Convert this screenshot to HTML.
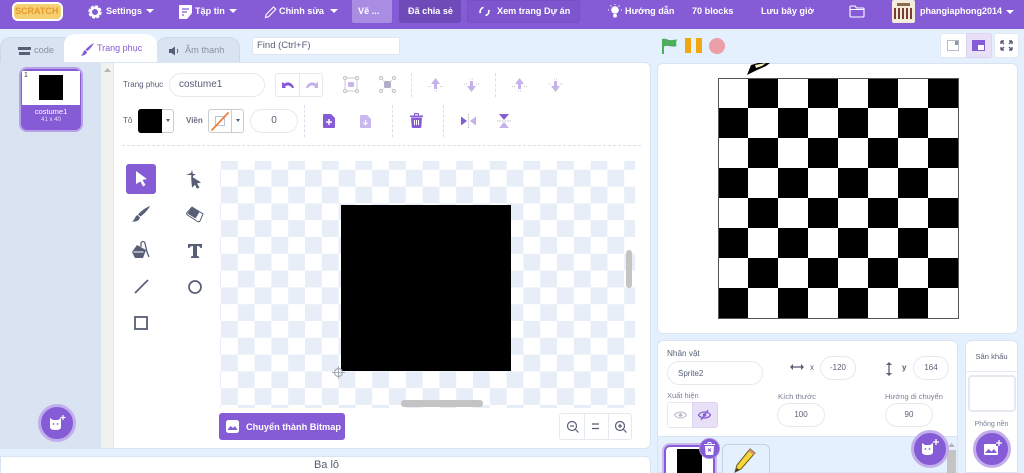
<!DOCTYPE html>
<html><head><meta charset="utf-8"><style>
*{box-sizing:border-box;margin:0;padding:0}
html,body{width:1024px;height:473px;overflow:hidden;background:#e5f0ff;font-family:"Liberation Sans",sans-serif;color:#575e75}
#w{position:relative;width:1024px;height:473px;overflow:hidden;background:#e5f0ff}
.a{position:absolute}
.t{position:absolute;white-space:nowrap;line-height:14px}
.h{color:#fff;font-size:9.1px;font-weight:bold;top:4px}
.pill{position:absolute;background:#fff;border:1px solid #e6e9ef;border-radius:14px;text-align:center;color:#575e75}
svg{position:absolute;overflow:visible}
</style></head><body><div id="w">
<!-- header -->
<div class="a" style="left:0;top:0;width:1024px;height:29px;background:#855cd6"></div>
<div class="a" style="left:12px;top:2px;width:51px;height:19px;background:#f6cf73;border:2px solid #fff;border-radius:6px"></div>
<div class="t" style="left:15px;top:4px;width:46px;font-size:9px;font-weight:bold;color:#e39a2d">SCRATCH</div>
<svg style="left:88px;top:5px" width="14" height="14" viewBox="0 0 14 14"><circle cx="7" cy="7" r="5.400" fill="none" stroke="#fff" stroke-width="2.600" stroke-dasharray="2.800 1.440" /><circle cx="7" cy="7" r="4.200" fill="none" stroke="#fff" stroke-width="2.400"/></svg>
<div class="t h" style="left:106px">Settings</div>
<svg style="left:146px;top:9px" width="8" height="5"><path d="M0 0h8L4 4z" fill="#fff"/></svg>
<svg style="left:179px;top:5px" width="13" height="14" viewBox="0 0 13 14"><path d="M1 0h11a1 1 0 0 1 1 1v7l-5 6H1a1 1 0 0 1-1-1V1a1 1 0 0 1 1-1z" fill="#fff"/><path d="M3 4h7M3 7h5M3 10h2" stroke="#855cd6" stroke-width="1.300"/></svg>
<div class="t h" style="left:195px">Tập tin</div>
<svg style="left:229px;top:9px" width="8" height="5"><path d="M0 0h8L4 4z" fill="#fff"/></svg>
<svg style="left:264px;top:5px" width="13" height="14" viewBox="0 0 13 14"><path d="M1.500 12.500l.7-3L9.500 2l2.300 2.300-7.300 7.400z" fill="none" stroke="#fff" stroke-width="1.100"/></svg>
<div class="t h" style="left:279px">Chỉnh sửa</div>
<svg style="left:330px;top:9px" width="8" height="5"><path d="M0 0h8L4 4z" fill="#fff"/></svg>
<div class="a" style="left:352px;top:0;width:40px;height:23px;background:#a88de3;border-radius:0 0 2px 2px"></div>
<div class="t h" style="left:358px">Vẽ ...</div>
<div class="a" style="left:399px;top:0;width:62px;height:23px;background:#6e4bb8;border-radius:0 0 3px 3px"></div>
<div class="t h" style="left:408px">Đã chia sẻ</div>
<div class="a" style="left:467px;top:0;width:113px;height:23px;background:#7d56cd;border-radius:0 0 3px 3px;border:1px solid #7650c4"></div>
<svg style="left:479px;top:6px" width="11" height="11" viewBox="0 0 11 11"><path d="M4.500 1.500A4 4 0 0 0 1.500 7L.5 5.500M6.500 9.500A4 4 0 0 0 9.500 4l1 1.500" fill="none" stroke="#fff" stroke-width="1.500"/></svg>
<div class="t h" style="left:497px">Xem trang Dự án</div>
<svg style="left:608px;top:4px" width="14" height="15" viewBox="0 0 14 15"><circle cx="7" cy="6" r="3.800" fill="#fff"/><rect x="5.200" y="10" width="3.600" height="3.500" rx="1" fill="#fff"/><path d="M7 0v1M1 6H0M14 6h-1M2.500 1.500l1 1M11.500 1.500l-1 1" stroke="#fff"/></svg>
<div class="t h" style="left:625px">Hướng dẫn</div>
<div class="t h" style="left:692px">70 blocks</div>
<div class="t h" style="left:761px">Lưu bây giờ</div>
<svg style="left:849px;top:5px" width="16" height="13" viewBox="0 0 16 13"><path d="M1 3V2a1 1 0 0 1 1-1h4l1.500 2H14a1 1 0 0 1 1 1v7a1 1 0 0 1-1 1H2a1 1 0 0 1-1-1zM1 4.500h14" fill="none" stroke="#fff" stroke-width="1.100"/></svg>
<div class="a" style="left:892px;top:0;width:23px;height:23px;background:#f3ebdc;border-radius:2px"></div>
<div class="a" style="left:894px;top:8px;width:19px;height:11px;background:repeating-linear-gradient(90deg,#7a3b32 0 2px,#f3ebdc 2px 4px)"></div>
<div class="a" style="left:897px;top:3px;width:13px;height:3px;background:#8a6b4c"></div>
<div class="t h" style="left:920px;font-size:9px">phangiaphong2014</div>
<svg style="left:1006px;top:10px" width="8" height="5"><path d="M0 0h8L4 4z" fill="#fff"/></svg>

<!-- tabs -->
<div class="a" style="left:0;top:37px;width:72px;height:26px;background:#d9e3f2;border:1px solid #ccd7e8;border-bottom:0;border-radius:11px 11px 0 0"></div>
<div class="a" style="left:156px;top:37px;width:84px;height:26px;background:#d9e3f2;border:1px solid #ccd7e8;border-bottom:0;border-radius:11px 11px 0 0"></div>
<div class="a" style="left:64px;top:34px;width:93px;height:30px;background:#fff;border-radius:11px 11px 0 0"></div>
<svg style="left:18px;top:46px" width="13" height="10" viewBox="0 0 13 10"><path d="M0 1h13v3H0zM1 6h11v3H1z" fill="#575e75"/></svg>
<div class="t" style="left:34px;top:43px;font-size:9.200px;color:#8a91a3">code</div>
<svg style="left:81px;top:43px" width="13" height="13" viewBox="0 0 13 13"><path d="M13 0C11.500 3 8.500 6.500 6.500 8L4.500 6.500C7 4 10 1.500 13 0zM4 7l2 2C5.500 11.500 2.500 13 0 12.500 2 11.500 2 8 4 7z" fill="#855cd6"/></svg>
<div class="t" style="left:97px;top:41px;font-size:9px;color:#855cd6">Trang phục</div>
<svg style="left:169px;top:46px" width="12" height="10" viewBox="0 0 12 10"><path d="M0 3h2.500L6 .5v9L2.500 7H0z" fill="#575e75"/><path d="M8 3a3 3 0 0 1 0 4" fill="none" stroke="#575e75"/></svg>
<div class="t" style="left:185px;top:43px;font-size:9.200px;color:#8a91a3">Âm thanh</div>
<div class="a" style="left:252px;top:37px;width:148px;height:18px;background:#fff;border:1px solid #dfe6f2;border-radius:2px"></div>
<div class="t" style="left:257px;top:39px;font-size:9.500px;color:#575e75">Find (Ctrl+F)</div>

<!-- editor panel -->
<div class="a" style="left:0;top:62px;width:651px;height:387px;background:#fff;border:1px solid #d9e3f2;border-radius:0 6px 6px 0"></div>
<div class="a" style="left:0;top:63px;width:101px;height:385px;background:#d9e3f2"></div>
<div class="a" style="left:101px;top:63px;width:13px;height:385px;background:#f1f1f1;border-right:1px solid #e6e6e6"></div>
<svg style="left:104px;top:68px" width="7" height="5"><path d="M0 4h7L3.500 0z" fill="#b5b5b5"/></svg>
<!-- costume thumb -->
<div class="a" style="left:19px;top:67px;width:64px;height:65px;background:#855cd6;border:2.500px solid #b7a0e8;border-radius:8px"></div>
<div class="a" style="left:22px;top:71px;width:58px;height:34px;background:#fff"></div>
<div class="a" style="left:39px;top:75px;width:24px;height:25px;background:#000"></div>
<div class="t" style="left:24px;top:72px;font-size:7px;color:#333;line-height:8px">1</div>
<div class="t" style="left:21px;top:107px;width:60px;text-align:center;font-size:7.500px;color:#fff;line-height:10px">costume1</div>
<div class="t" style="left:21px;top:116px;width:60px;text-align:center;font-size:6px;color:#e6dcf7;line-height:9px">41 x 40</div>
<!-- add costume -->
<div class="a" style="left:38px;top:404px;width:38px;height:38px;background:#855cd6;border:3px solid #c2aeea;border-radius:50%"></div>
<svg style="left:49px;top:415px" width="17" height="17" viewBox="0 0 17 17"><path d="M1 3l3 2h5l3-2v9c0 2-2 3-5.500 3S1 14 1 12z" fill="#fff"/><circle cx="4.500" cy="9" r=".9" fill="#855cd6"/><circle cx="8.500" cy="9" r=".9" fill="#855cd6"/><path d="M14 0v5M11.500 2.500h5" stroke="#fff" stroke-width="1.200"/></svg>

<!-- toolbar -->
<div class="t" style="left:123px;top:78px;font-size:8px">Trang phục</div>
<div class="pill" style="left:169px;top:73px;width:96px;height:24px"></div>
<div class="t" style="left:179px;top:78px;font-size:10px">costume1</div>
<div class="a" style="left:275px;top:73px;width:48px;height:24px;background:#fff;border:1px solid #e6e9ef;border-radius:3px"></div>
<div class="a" style="left:299px;top:73px;width:1px;height:24px;background:#e6e9ef"></div>
<svg style="left:282px;top:81px" width="12" height="8" viewBox="0 0 12 8"><path d="M0 1l0 6 4 0-1-1.500C5 4 8 4 10 7h2C11 2 6 0 2.500 2.500z" fill="#855cd6"/></svg>
<svg style="left:306px;top:81px" width="12" height="8" viewBox="0 0 12 8"><path d="M12 1v6H8l1-1.500C7 4 4 4 2 7H0C1 2 6 0 9.500 2.500z" fill="#c4b2ea"/></svg>
<svg style="left:343px;top:76px" width="16" height="17" viewBox="0 0 16 17" opacity=".45"><rect x="2" y="2" width="12" height="13" fill="none" stroke="#8e8aa8"/><rect x="5" y="6" width="6" height="5" rx="1" fill="#855cd6"/><circle cx="2" cy="2" r="1.500" fill="#fff" stroke="#777"/><circle cx="14" cy="2" r="1.500" fill="#fff" stroke="#777"/><circle cx="2" cy="15" r="1.500" fill="#fff" stroke="#777"/><circle cx="14" cy="15" r="1.500" fill="#fff" stroke="#777"/></svg>
<svg style="left:379px;top:76px" width="17" height="17" viewBox="0 0 17 17" opacity=".45"><path d="M2 2l13 13M15 2L2 15" stroke="#aaa" stroke-dasharray="2 1"/><rect x="5" y="5" width="7" height="7" rx="2" fill="#5b4c8c"/><circle cx="2" cy="2" r="1.500" fill="#fff" stroke="#777"/><circle cx="15" cy="2" r="1.500" fill="#fff" stroke="#777"/><circle cx="2" cy="15" r="1.500" fill="#fff" stroke="#777"/><circle cx="15" cy="15" r="1.500" fill="#fff" stroke="#777"/></svg>
<div class="a" style="left:411px;top:73px;height:24px;border-left:1px dashed #dcdcea"></div>
<div class="a" style="left:495px;top:73px;height:24px;border-left:1px dashed #dcdcea"></div>
<svg style="left:428px;top:78px" width="15" height="14" viewBox="0 0 15 14"><path d="M7.500 0L12 6H9v5H6V6H3z" fill="#c4b2ea"/><path d="M0 8.500h3M12 8.500h3M6 13h3" stroke="#ccc" stroke-dasharray="1 1"/></svg>
<svg style="left:464px;top:78px" width="15" height="14" viewBox="0 0 15 14"><path d="M7.500 14L12 8H9V3H6v5H3z" fill="#c4b2ea"/><path d="M0 6h3M12 6h3M6 1h3" stroke="#ccc" stroke-dasharray="1 1"/></svg>
<svg style="left:512px;top:78px" width="15" height="14" viewBox="0 0 15 14"><path d="M7.500 0L12 6H9v5H6V6H3z" fill="#c4b2ea"/><path d="M0 8.500h3M12 8.500h3M6 13h3" stroke="#ccc" stroke-dasharray="1 1"/></svg>
<svg style="left:548px;top:78px" width="15" height="14" viewBox="0 0 15 14"><path d="M7.500 14L12 8H9V3H6v5H3z" fill="#c4b2ea"/><path d="M0 6h3M12 6h3M6 1h3" stroke="#ccc" stroke-dasharray="1 1"/></svg>

<div class="t" style="left:123px;top:114px;font-size:8px">Tô</div>
<div class="a" style="left:138px;top:109px;width:36px;height:24px;background:#fff;border:1px solid #ccc;border-radius:3px"></div>
<div class="a" style="left:138px;top:109px;width:24px;height:24px;background:#000;border-radius:3px 0 0 3px"></div>
<svg style="left:166px;top:119px" width="4" height="3"><path d="M0 0h4L2 3z" fill="#575e75"/></svg>
<div class="t" style="left:186px;top:114px;font-size:8px;font-weight:bold;color:#6b7185">Viền</div>
<div class="a" style="left:208px;top:109px;width:36px;height:24px;background:#fff;border:1px solid #ccc;border-radius:3px"></div>
<div class="a" style="left:231px;top:109px;width:1px;height:24px;background:#ccc"></div>
<svg style="left:209px;top:110px" width="22" height="22" viewBox="0 0 22 22"><rect x="6.500" y="6.500" width="9" height="9" fill="#fff" stroke="#b9c4d8"/><path d="M3 20L19 3" stroke="#e8823c" stroke-width="1.800" stroke-linecap="round"/></svg>
<svg style="left:236px;top:119px" width="4" height="3"><path d="M0 0h4L2 3z" fill="#575e75"/></svg>
<div class="pill" style="left:250px;top:109px;width:48px;height:24px"></div>
<div class="t" style="left:250px;top:114px;width:48px;text-align:center;font-size:10px">0</div>
<div class="a" style="left:304px;top:105px;height:32px;border-left:1px dashed #dcdcea"></div>
<div class="a" style="left:392px;top:105px;height:32px;border-left:1px dashed #dcdcea"></div>
<div class="a" style="left:443px;top:105px;height:32px;border-left:1px dashed #dcdcea"></div>
<svg style="left:323px;top:114px" width="12" height="14" viewBox="0 0 12 14"><path d="M1 0h7l4 4v9a1 1 0 0 1-1 1H1a1 1 0 0 1-1-1V1a1 1 0 0 1 1-1z" fill="#855cd6"/><path d="M6 5v6M3 8h6" stroke="#fff" stroke-width="1.400"/></svg>
<svg style="left:360px;top:115px" width="11" height="13" viewBox="0 0 11 13"><path d="M1 0h6l4 4v8a1 1 0 0 1-1 1H1a1 1 0 0 1-1-1V1a1 1 0 0 1 1-1z" fill="#c9b8ee"/><path d="M5.500 5v4M3.500 7.500l2 2 2-2" stroke="#fff" stroke-width="1.200" fill="none"/></svg>
<svg style="left:410px;top:113px" width="13" height="15" viewBox="0 0 13 15"><path d="M0 2.500h13v1.500H0zM4 2.500V1a1 1 0 0 1 1-1h3a1 1 0 0 1 1 1v1.500H8V1.200H5v1.300zM1 4.500h11l-.7 9.500a1 1 0 0 1-1 1H2.700a1 1 0 0 1-1-1z" fill="#855cd6"/><path d="M4.500 7v5M6.500 7v5M8.500 7v5" stroke="#fff" stroke-width="1"/></svg>
<svg style="left:460px;top:114px" width="17" height="14" viewBox="0 0 17 14"><path d="M1 2.500l6 4.500-6 4.500z" fill="#855cd6"/><path d="M16 2.500L10 7l6 4.500z" fill="#c4b2ea"/><path d="M8.500 0v14" stroke="#bbb" stroke-dasharray="1.500 1"/></svg>
<svg style="left:497px;top:113px" width="14" height="16" viewBox="0 0 14 16"><path d="M2 1h10L7 7z" fill="#855cd6"/><path d="M2 15h10L7 9z" fill="#c4b2ea"/><path d="M0 8h14" stroke="#bbb" stroke-dasharray="1.500 1"/></svg>
<div class="a" style="left:122px;top:145px;width:519px;border-top:1px dashed #dcdcea"></div>

<!-- tools -->
<div class="a" style="left:126px;top:164px;width:30px;height:30px;background:#855cd6;border-radius:3px"></div>
<svg style="left:135px;top:171px" width="13" height="16" viewBox="0 0 13 16"><path d="M1 0l11 8-4.500 1 3 5-2.500 1.500-2.500-5L1 13z" fill="#fff"/></svg>
<svg style="left:186px;top:169px" width="17" height="20" viewBox="0 0 17 20"><path d="M5 7l10 6.500-4 1 2.500 4-2.500 1.200-2-4-3 3z" fill="#575e75"/><path d="M0 6l5-2 1-3 1 4 3 0-3 2 0 2-2-3z" fill="#575e75"/></svg>
<svg style="left:132px;top:206px" width="18" height="16" viewBox="0 0 18 16"><path d="M18 0C16 4 12 8 8.500 10.500L6 8.500C9 5 14 1.500 18 0zM5.500 9l2.500 2.500c-.5 3-4 4.500-8 4 2.500-1 3-5.500 5.500-6.500z" fill="#575e75"/></svg>
<svg style="left:186px;top:207px" width="18" height="16" viewBox="0 0 18 16"><path d="M6 0l11 7-3 7a2 2 0 0 1-2.500.5L1.500 8a2 2 0 0 1-.5-2.500z" fill="#fff" stroke="#575e75" stroke-width="1"/><path d="M6 0L13.500 5 9.500 11.500 1.500 6.500z" fill="#575e75"/></svg>
<svg style="left:132px;top:241px" width="18" height="19" viewBox="0 0 18 19"><path d="M5 4L14 9 11 17H3L0 11z" fill="#575e75"/><path d="M1.500 11h10" stroke="#fff"/><path d="M9 6V2.500a2 2 0 0 1 4 0L15 11l2 5" fill="none" stroke="#575e75" stroke-width="1.300"/></svg>
<svg style="left:187px;top:243px" width="16" height="16" viewBox="0 0 16 16"><path d="M1 1h14v4h-1.500C13 3.500 12 3 10 3v10l2 .5V15H4v-1.500L6 13V3C4 3 3 3.500 2.500 5H1z" fill="#575e75"/></svg>
<svg style="left:134px;top:279px" width="15" height="15"><path d="M1 14L14 1" stroke="#575e75" stroke-width="1.700"/></svg>
<svg style="left:188px;top:280px" width="14" height="14"><circle cx="7" cy="7" r="6" fill="none" stroke="#575e75" stroke-width="1.700"/></svg>
<svg style="left:134px;top:316px" width="14" height="14"><rect x="1" y="1" width="12" height="12" fill="none" stroke="#575e75" stroke-width="1.800"/></svg>

<!-- canvas -->
<svg style="left:220px;top:161px" width="415" height="247"><defs><pattern id="c" width="33.600" height="33.600" patternUnits="userSpaceOnUse" x="1" y="-8"><rect width="33.600" height="33.600" fill="#fff"/><rect width="16.800" height="16.800" fill="#e7eef8"/><rect x="16.800" y="16.800" width="16.800" height="16.800" fill="#e7eef8"/></pattern></defs><rect width="415" height="247" fill="url(#c)"/></svg>
<div class="a" style="left:341px;top:205px;width:170px;height:166px;background:#000"></div>
<svg style="left:332px;top:366px" width="13" height="13" viewBox="0 0 13 13"><circle cx="6.500" cy="6.500" r="4" fill="none" stroke="#a8aeb8" stroke-width="1.200"/><path d="M6.500 0v13M0 6.500h13" stroke="#a8aeb8"/></svg>
<div class="a" style="left:401px;top:400px;width:82px;height:7px;background:#c4c4c4;border-radius:3px"></div>
<div class="a" style="left:626px;top:250px;width:6px;height:38px;background:#c4c4c4;border-radius:3px"></div>

<div class="a" style="left:219px;top:413px;width:126px;height:27px;background:#855cd6;border-radius:3px"></div>
<svg style="left:226px;top:420px" width="13" height="13" viewBox="0 0 13 13"><rect width="13" height="13" rx="2.500" fill="#fff"/><path d="M1.500 10l3-4 2.500 2 2-2 2.500 4z" fill="#855cd6"/></svg>
<div class="t" style="left:246px;top:420px;font-size:9.200px;font-weight:bold;color:#fff">Chuyển thành Bitmap</div>
<div class="a" style="left:559px;top:413px;width:73px;height:27px;background:#fff;border:1px solid #e6e9ef;border-radius:3px"></div>
<div class="a" style="left:584px;top:413px;width:1px;height:27px;background:#e6e9ef"></div>
<div class="a" style="left:608px;top:413px;width:1px;height:27px;background:#e6e9ef"></div>
<svg style="left:566px;top:420px" width="13" height="13" viewBox="0 0 13 13"><circle cx="6" cy="6" r="4.500" fill="none" stroke="#575e75" stroke-width="1.200"/><path d="M4 6h4M9.500 9.500l3 3" stroke="#575e75" stroke-width="1.200"/></svg>
<svg style="left:592px;top:423px" width="8" height="7"><path d="M0 1h7M0 5.500h7" stroke="#575e75" stroke-width="1.300"/></svg>
<svg style="left:614px;top:420px" width="13" height="13" viewBox="0 0 13 13"><circle cx="6" cy="6" r="4.500" fill="none" stroke="#575e75" stroke-width="1.200"/><path d="M4 6h4M6 4v4M9.500 9.500l3 3" stroke="#575e75" stroke-width="1.200"/></svg>

<!-- backpack -->
<div class="a" style="left:0;top:456px;width:651px;height:20px;background:#fff;border:1px solid #d9e3f2;border-radius:0 6px 0 0"></div>
<div class="t" style="left:1px;top:458px;width:651px;text-align:center;font-size:11px;color:#575e75">Ba lô</div>

<!-- controls -->
<svg style="left:661px;top:38px" width="17" height="16" viewBox="0 0 17 16"><path d="M1 1c4-1.500 6 2 11 1 2-.4 3.500-.5 4-.5-1 2-1 4-.5 6.500-4 2-9-1.500-12.500.5V16H1z" fill="#4cae5a"/></svg>
<div class="a" style="left:685px;top:38px;width:6px;height:15px;background:#f1a80f"></div>
<div class="a" style="left:696px;top:38px;width:6px;height:15px;background:#f1a80f"></div>
<div class="a" style="left:709px;top:38px;width:16px;height:16px;background:#eb9fa6;border-radius:50%"></div>
<div class="a" style="left:940px;top:33px;width:52px;height:25px;background:#fff;border:1px solid #e0e8f4;border-radius:3px"></div>
<div class="a" style="left:966px;top:33px;width:26px;height:25px;background:#e8e0f7;border:1px solid #dcd3f0;border-radius:0 3px 3px 0"></div>
<svg style="left:947px;top:40px" width="12" height="11"><rect x=".5" y=".5" width="11" height="10" fill="#fff" stroke="#b7bcc8"/><rect x="8" y="1" width="3" height="4" fill="#8e94a5"/></svg>
<svg style="left:972px;top:40px" width="13" height="11"><rect x=".5" y=".5" width="12" height="10" fill="#fff" stroke="#855cd6"/><rect x="1" y="1" width="5" height="9" fill="#855cd6"/><rect x="6" y="1" width="6" height="4" fill="#855cd6"/></svg>
<div class="a" style="left:994px;top:33px;width:25px;height:25px;background:#fff;border:1px solid #e0e8f4;border-radius:3px"></div>
<svg style="left:1000px;top:40px" width="13" height="11" viewBox="0 0 13 11"><path d="M1 1l3 3M1 1h3M1 1v3M12 1L9 4M12 1H9M12 1v3M1 10l3-3M1 10h3M1 10V7M12 10L9 7M12 10H9M12 10V7" stroke="#575e75" stroke-width="1.400" fill="none"/></svg>

<!-- stage -->
<div class="a" style="left:657px;top:63px;width:361px;height:271px;background:#fff;border:1px solid #d9e3f2;border-radius:6px"></div>
<svg style="left:746px;top:63px" width="24" height="12" viewBox="0 0 24 12"><path d="M1 12L5 2 12 0 24 0 20 3 9 8z" fill="#000"/><path d="M9 2L20 0 16 3 10 5z" fill="#f5f0c0"/></svg>
<svg style="left:718px;top:78px" width="241" height="241" viewBox="0 0 241 241"><defs><pattern id="b" width="60" height="60" patternUnits="userSpaceOnUse"><rect width="60" height="60" fill="#fff"/><rect x="30" width="30" height="30" fill="#000"/><rect y="30" width="30" height="30" fill="#000"/></pattern></defs><rect x=".5" y=".5" width="240" height="240" fill="url(#b)" stroke="#555"/></svg>

<!-- sprite info -->
<div class="a" style="left:657px;top:340px;width:301px;height:133px;background:#e5f0ff;border:1px solid #d9e3f2;border-radius:6px 6px 0 0;overflow:hidden"></div>
<div class="a" style="left:658px;top:341px;width:299px;height:96px;background:#fff;border-radius:6px 6px 0 0;border-bottom:1px solid #d9e3f2"></div>
<div class="t" style="left:667px;top:347px;font-size:8.200px;color:#575e75">Nhân vật</div>
<div class="pill" style="left:667px;top:361px;width:96px;height:24px"></div>
<div class="t" style="left:678px;top:367px;font-size:8px">Sprite2</div>
<svg style="left:790px;top:363px" width="14" height="8" viewBox="0 0 14 8"><path d="M1 4h12" stroke="#575e75" stroke-width="1.300"/><path d="M0 4l3-3v6zM14 4l-3-3v6z" fill="#575e75"/></svg>
<div class="t" style="left:810px;top:361px;font-size:8px">x</div>
<div class="pill" style="left:820px;top:356px;width:36px;height:24px"></div>
<div class="t" style="left:820px;top:361px;width:36px;text-align:center;font-size:8px">-120</div>
<svg style="left:885px;top:362px" width="8" height="14" viewBox="0 0 8 14"><path d="M4 1v12" stroke="#575e75" stroke-width="1.300"/><path d="M4 0l3 3H1zM4 14l3-3H1z" fill="#575e75"/></svg>
<div class="t" style="left:902px;top:361px;font-size:8px;font-weight:bold">y</div>
<div class="pill" style="left:913px;top:356px;width:36px;height:24px"></div>
<div class="t" style="left:913px;top:361px;width:36px;text-align:center;font-size:8px">164</div>
<div class="t" style="left:667px;top:389px;font-size:7.500px;color:#7a8094">Xuất hiện</div>
<div class="a" style="left:667px;top:402px;width:51px;height:26px;background:#fff;border:1px solid #e6e9ef;border-radius:3px"></div>
<div class="a" style="left:692px;top:402px;width:26px;height:26px;background:#e8e0f7;border:1px solid #dcd3f0;border-radius:0 3px 3px 0"></div>
<svg style="left:674px;top:410px" width="13" height="10" viewBox="0 0 13 10"><path d="M.5 5C3 1 10 1 12.500 5 10 9 3 9 .5 5z" fill="none" stroke="#b4b8c4"/><circle cx="6.500" cy="5" r="1.800" fill="#b4b8c4"/></svg>
<svg style="left:698px;top:409px" width="13" height="12" viewBox="0 0 13 12"><path d="M.5 6C3 2 10 2 12.500 6 10 10 3 10 .5 6z" fill="none" stroke="#855cd6" stroke-width="1.300"/><circle cx="6.500" cy="6" r="1.800" fill="#855cd6"/><path d="M10 1L3 11" stroke="#855cd6" stroke-width="1.300"/></svg>
<div class="t" style="left:778px;top:390px;font-size:7.700px;color:#7a8094">Kích thước</div>
<div class="pill" style="left:777px;top:403px;width:48px;height:24px"></div>
<div class="t" style="left:777px;top:408px;width:48px;text-align:center;font-size:8px">100</div>
<div class="t" style="left:885px;top:390px;font-size:7.500px;color:#7a8094">Hướng di chuyển</div>
<div class="pill" style="left:885px;top:403px;width:48px;height:24px"></div>
<div class="t" style="left:885px;top:408px;width:48px;text-align:center;font-size:8px">90</div>

<!-- sprites -->
<div class="a" style="left:664px;top:445px;width:51px;height:40px;background:#fff;border:2.500px solid #855cd6;border-radius:6px;box-shadow:0 0 0 2px #c9b8ee"></div>
<div class="a" style="left:677px;top:449px;width:25px;height:24px;background:#000"></div>
<div class="a" style="left:699px;top:438px;width:21px;height:21px;background:#855cd6;border:1.500px solid #a88de3;border-radius:50%"></div>
<svg style="left:704px;top:442px" width="11" height="13" viewBox="0 0 11 13"><path d="M0 2h11v1H0zM3.500 2V1a1 1 0 0 1 1-1h2a1 1 0 0 1 1 1v1h-1V1h-2v1z" fill="#fff"/><path d="M1 4h9l-.6 8a1 1 0 0 1-1 1H2.600a1 1 0 0 1-1-1z" fill="#fff"/><path d="M4 6.500l3 3M7 6.500l-3 3" stroke="#855cd6"/></svg>
<div class="a" style="left:722px;top:444px;width:48px;height:40px;background:#e5f0ff;border:1px solid #c4d0e4;border-radius:6px"></div>
<svg style="left:734px;top:448px" width="22" height="25" viewBox="0 0 22 25"><path d="M1 24l2-7L16 1l5 4L7 21z" fill="#f6d63c" stroke="#6b5a10" stroke-width="1"/><path d="M16 1l5 4-1.500 2-5-4z" fill="#d98b7a"/><path d="M1 24l2-4 2.500 2z" fill="#333"/></svg>
<div class="a" style="left:947px;top:450px;width:9px;height:23px;background:#c4c4c4"></div>
<svg style="left:948px;top:443px" width="7" height="5"><path d="M0 4h7L3.500 0z" fill="#b5b5b5"/></svg>
<div class="a" style="left:911px;top:430px;width:38px;height:38px;background:#855cd6;border:3px solid #c2aeea;border-radius:50%"></div>
<svg style="left:921px;top:439px" width="18" height="18" viewBox="0 0 18 18"><path d="M1 4l3 2h5l3-2v9c0 2-2 3-5.500 3S1 15 1 13z" fill="#fff"/><circle cx="4.500" cy="10" r=".9" fill="#855cd6"/><circle cx="8.500" cy="10" r=".9" fill="#855cd6"/><path d="M15 0v6M12 3h6" stroke="#fff" stroke-width="1.300"/></svg>

<!-- stage select -->
<div class="a" style="left:965px;top:340px;width:53px;height:133px;background:#fff;border:1px solid #d9e3f2;border-radius:6px 6px 0 0"></div>
<div class="a" style="left:966px;top:371px;width:51px;border-top:1px solid #e6eaf2"></div>
<div class="t" style="left:965px;top:350px;width:53px;text-align:center;font-size:7.600px">Sân khấu</div>
<div class="a" style="left:968px;top:375px;width:48px;height:37px;background:#fff;border:2px solid #e6e9ef;border-radius:4px"></div>
<div class="t" style="left:965px;top:418px;width:53px;text-align:center;font-size:7px;color:#7a8094">Phông nền</div>
<div class="a" style="left:973px;top:430px;width:38px;height:38px;background:#855cd6;border:3px solid #c2aeea;border-radius:50%"></div>
<svg style="left:984px;top:440px" width="18" height="17" viewBox="0 0 18 17"><path d="M1 4h11v2h2v8a1 1 0 0 1-1 1H1a1 1 0 0 1-1-1V5a1 1 0 0 1 1-1z" fill="#fff"/><path d="M1 13l3.500-4 3 2.500 2.500-2.500 3 4z" fill="#855cd6"/><path d="M15 0v6M12 3h6" stroke="#fff" stroke-width="1.300"/></svg>
</div></body></html>
